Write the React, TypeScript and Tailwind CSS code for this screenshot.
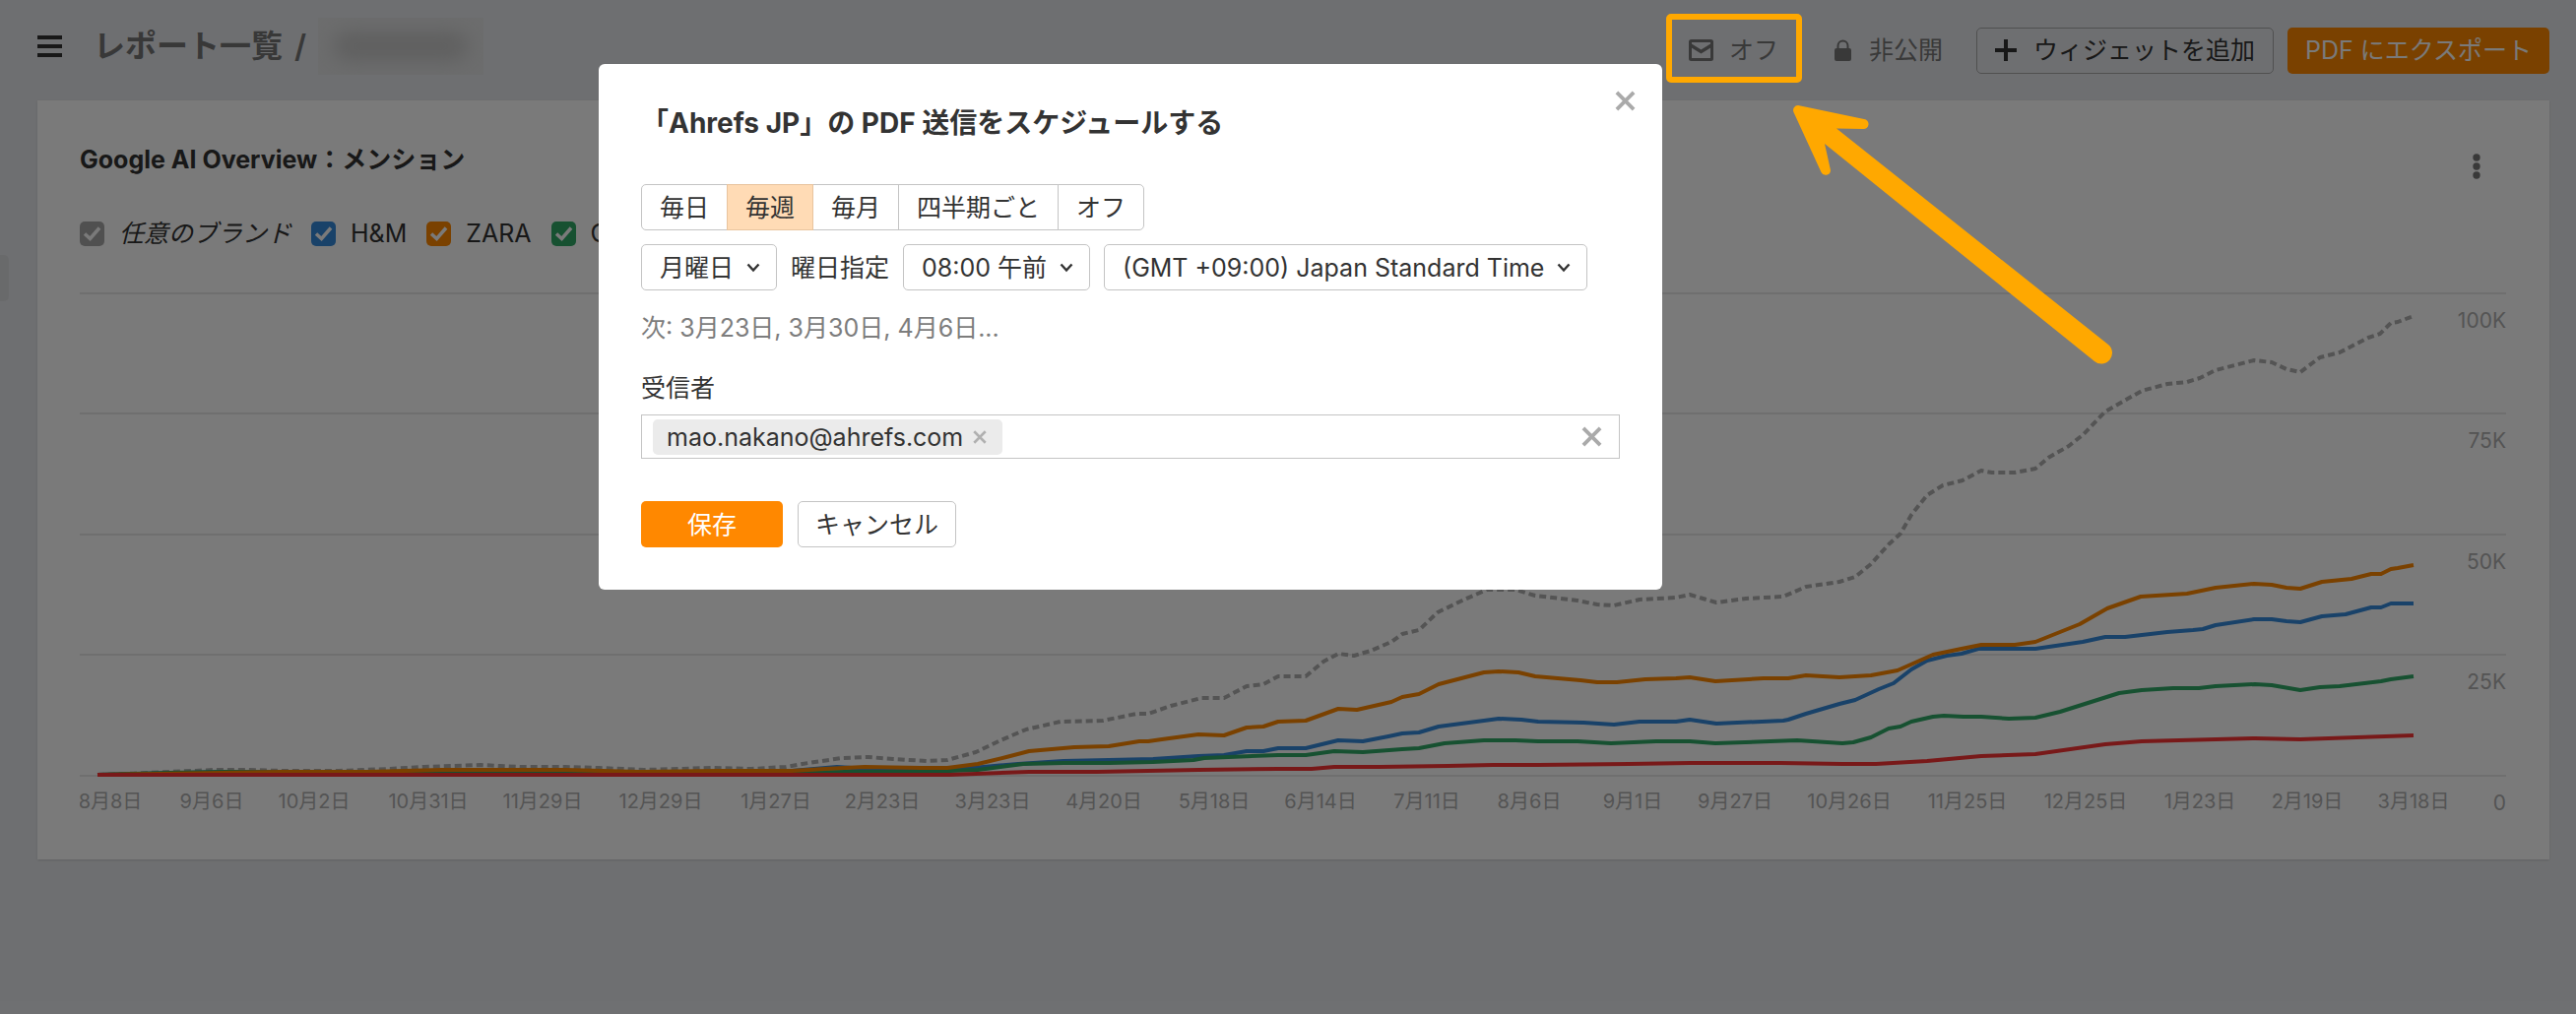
import { useState } from 'react'

type Series = {
  name: string
  color: string
  dashed?: boolean
  points: string
}

const series: Series[] = [
  {
    name: 'any',
    color: '#b0b0b0',
    dashed: true,
    points:
      '99,787 129,786 172,784 218,782 253,782 287,783 344,783 396,781 430,779 488,777 528,779 574,779 608,780 654,782 689,781 723,780 763,781 798,779 821,775 855,770 882,769 907,771 942,773 962,772 991,764 1016,752 1042,741 1077,733 1120,732 1154,725 1166,725 1189,717 1220,709 1243,709 1266,697 1283,695 1298,687 1326,687 1344,672 1359,664 1375,666 1392,661 1413,652 1424,644 1441,640 1460,622 1487,609 1510,599 1539,599 1559,605 1602,610 1622,614 1639,615 1665,609 1702,607 1716,604 1743,612 1773,608 1811,606 1834,596 1868,591 1884,586 1900,573 1918,553 1930,542 1941,523 1957,503 1973,493 1993,488 2012,478 2023,480 2046,480 2067,476 2080,465 2101,453 2116,441 2138,418 2175,397 2201,390 2221,388 2234,384 2250,376 2289,366 2307,368 2322,375 2336,378 2356,363 2376,358 2405,343 2417,339 2428,328 2435,327 2451,321',
  },
  {
    name: 'H&M',
    color: '#368adb',
    points:
      '99,787 230,784 344,785 448,783 574,783 649,785 729,784 804,783 850,779 896,782 959,782 999,779 1034,776 1080,773 1126,772 1171,771 1217,768 1243,767 1266,763 1283,763 1298,760 1326,760 1359,752 1384,753 1410,748 1424,745 1441,744 1461,738 1507,732 1522,730 1545,731 1562,733 1608,734 1639,736 1665,733 1702,733 1716,731 1743,735 1811,732 1816,731 1834,725 1868,715 1884,711 1908,700 1923,694 1941,680 1957,671 1977,666 1992,664 2009,659 2067,659 2115,652 2138,647 2158,647 2201,642 2227,640 2237,639 2250,635 2289,629 2307,629 2322,631 2336,632 2358,626 2382,624 2408,617 2418,617 2428,613 2451,613',
  },
  {
    name: 'GU',
    color: '#30a968',
    points:
      '99,787 172,785 230,784 344,785 545,784 660,785 746,785 861,784 936,784 965,783 993,782 1039,776 1080,775 1126,775 1171,774 1212,772 1223,770 1298,767 1326,767 1355,763 1384,764 1424,761 1441,760 1467,755 1507,752 1539,752 1562,753 1602,753 1636,755 1682,753 1716,753 1742,755 1825,752 1871,755 1882,754 1900,749 1918,740 1930,738 1941,733 1963,728 1974,727 1994,728 2012,728 2040,730 2067,729 2092,723 2152,704 2175,701 2207,699 2233,699 2250,697 2290,695 2307,696 2336,701 2356,698 2376,697 2418,692 2428,690 2451,687',
  },
  {
    name: 'ZARA',
    color: '#ff8800',
    points:
      '99,787 287,784 373,784 448,782 574,782 649,784 729,783 804,783 838,781 878,779 936,780 962,780 993,776 1022,769 1045,763 1091,759 1126,758 1157,753 1166,753 1180,751 1217,746 1243,747 1266,739 1283,738 1298,733 1326,732 1359,720 1378,721 1413,713 1424,708 1441,705 1461,695 1507,683 1522,682 1542,683 1559,687 1605,691 1622,693 1642,693 1671,690 1702,689 1716,688 1742,692 1791,689 1816,689 1834,686 1868,688 1900,686 1927,681 1963,665 1992,659 2012,655 2046,655 2067,652 2112,634 2140,618 2174,606 2221,603 2250,597 2289,593 2307,594 2322,597 2336,598 2358,591 2388,588 2408,583 2418,583 2428,578 2435,577 2451,574',
  },
  {
    name: 'other',
    color: '#fa3636',
    points:
      '99,787 965,787 1045,784 1114,784 1217,782 1298,781 1332,781 1355,779 1401,779 1470,778 1516,777 1562,777 1654,776 1716,775 1808,775 1871,776 1905,776 1957,773 2012,768 2067,766 2138,756 2175,753 2290,750 2336,751 2451,747',
  },
]

const yTicks = [
  { y: 298, label: '100K' },
  { y: 420, label: '75K' },
  { y: 543, label: '50K' },
  { y: 665, label: '25K' },
  { y: 788, label: '0' },
]

const xTicks: [number, string][] = [
  [112, '8月8日'],
  [215, '9月6日'],
  [319, '10月2日'],
  [435, '10月31日'],
  [551, '11月29日'],
  [671, '12月29日'],
  [788, '1月27日'],
  [896, '2月23日'],
  [1008, '3月23日'],
  [1121, '4月20日'],
  [1233, '5月18日'],
  [1341, '6月14日'],
  [1449, '7月11日'],
  [1553, '8月6日'],
  [1658, '9月1日'],
  [1762, '9月27日'],
  [1878, '10月26日'],
  [1998, '11月25日'],
  [2118, '12月25日'],
  [2234, '1月23日'],
  [2343, '2月19日'],
  [2451, '3月18日'],
]

const legend = [
  { label: '任意のブランド', box: 'bg-[#a8a8a8]', text: 'italic' },
  { label: 'H&M', box: 'bg-[#368adb]', text: '' },
  { label: 'ZARA', box: 'bg-[#ff8800]', text: '' },
  { label: 'GU', box: 'bg-[#30a968]', text: '' },
]

const frequencies = ['毎日', '毎週', '毎月', '四半期ごと', 'オフ']

const Cross = ({ className }: { className: string }) => (
  <svg viewBox="0 0 22 22" className={className} fill="none" stroke="currentColor" strokeWidth="4">
    <path d="M2 2 20 20M20 2 2 20" />
  </svg>
)

const Dropdown = ({ label, options }: { label: string; options: string[] }) => (
  <div className="relative">
    <select
      aria-label={label}
      className="block h-[47px] appearance-none rounded-[5px] border border-[#c4c4c4] bg-white pr-[42px] pl-[18px] leading-8"
    >
      {options.map((option) => (
        <option key={option}>{option}</option>
      ))}
    </select>
    <svg
      viewBox="0 0 14 10"
      className="pointer-events-none absolute top-[19px] right-[17px] h-[10px] w-[14px]"
      fill="none"
      stroke="currentColor"
      strokeWidth="2.4"
    >
      <path d="M1.5 1.5 7 7.5 12.5 1.5" />
    </svg>
  </div>
)

const Header = () => (
  <header className="flex h-[102px] items-center justify-between pr-[27px] pl-[38px]">
    <div className="flex items-center pb-2">
      <button aria-label="メニュー" className="flex w-[25px] flex-col gap-[5px]">
        <span className="h-1 bg-[#333]" />
        <span className="h-1 bg-[#333]" />
        <span className="h-1 bg-[#333]" />
      </button>
      <h1 className="ml-8 flex items-center text-[32px] leading-10 font-semibold text-[#757575]">
        <a href="#reports">レポート一覧</a>
        <span className="mx-3">/</span>
        <span className="flex h-[58px] w-[168px] items-center justify-center overflow-hidden bg-[#e2e3e4]">
          <span className="h-7 w-[136px] rounded-full bg-[#c6c6c6] blur-[10px]" />
        </span>
      </h1>
    </div>
    <div className="flex items-center">
      <button className="flex items-center gap-4 text-[#777]">
        <svg viewBox="0 0 25 22" className="h-[22px] w-[25px]" fill="none" stroke="currentColor">
          <rect x="1.5" y="1.5" width="22" height="19" rx="1" strokeWidth="3" />
          <path d="M2 6 12.500 12.500 23 6" strokeWidth="3.400" />
        </svg>
        オフ
      </button>
      <button className="ml-[57px] flex items-center gap-[18px] text-[#777]">
        <svg viewBox="0 0 17 22" className="h-[22px] w-[17px]">
          <rect y="9" width="17" height="13" rx="2" fill="currentColor" />
          <path
            d="M3.500 10V6.500a5 5 0 0 1 10 0V10"
            fill="none"
            stroke="currentColor"
            strokeWidth="2"
          />
        </svg>
        非公開
      </button>
      <button className="ml-[34px] flex h-[47px] items-center gap-[17px] rounded-[5px] border border-[#a8a8a8] px-[18px]">
        <svg viewBox="0 0 22 22" className="size-[22px]" stroke="currentColor" strokeWidth="4">
          <path d="M11 0v22M0 11h22" />
        </svg>
        ウィジェットを追加
      </button>
      <button className="ml-[14px] h-[47px] rounded-[5px] bg-[#ff8800] px-[18px] text-white">
        PDF にエクスポート
      </button>
    </div>
  </header>
)

const Chart = () => (
  <svg viewBox="81 254 2464 576" className="block h-auto w-full" role="img" aria-label="メンション">
    {yTicks.map((tick) => (
      <g key={tick.label}>
        <path d={`M81 ${tick.y}H2545`} stroke="#e9e9e9" strokeWidth="2" />
        <text x="2545" y={tick.y + 35} textAnchor="end" fontSize="21" fill="#b0b0b0">
          {tick.label}
        </text>
      </g>
    ))}
    {series.map((s) => (
      <polyline
        key={s.name}
        points={s.points}
        fill="none"
        stroke={s.color}
        strokeWidth="4"
        strokeLinejoin="round"
        strokeDasharray={s.dashed ? '7 4' : undefined}
      />
    ))}
    {xTicks.map(([x, label]) => (
      <text key={label} x={x} y="821" textAnchor="middle" fontSize="20" fill="#b0b0b0">
        {label}
      </text>
    ))}
  </svg>
)

const MentionsCard = () => (
  <section className="mr-[27px] ml-[38px] bg-white pt-[43px] pr-11 pb-[43px] pl-[43px] shadow-sm">
    <div className="flex items-start justify-between">
      <h2 className="text-[25px] leading-[34px] font-bold">Google AI Overview：メンション</h2>
      <button
        aria-label="その他"
        className="flex h-[47px] w-15 items-center justify-center text-[#777]"
      >
        <svg viewBox="0 0 8 26" className="h-[26px] w-2" fill="currentColor">
          <circle cx="4" cy="4" r="3.700" />
          <circle cx="4" cy="13" r="3.700" />
          <circle cx="4" cy="22" r="3.700" />
        </svg>
      </button>
    </div>
    <div className="mt-7 flex gap-5">
      {legend.map((item) => (
        <label key={item.label} className="flex h-[34px] items-center gap-[15px]">
          <span className="grid place-items-center">
            <input
              type="checkbox"
              defaultChecked
              className={`col-start-1 row-start-1 size-[25px] appearance-none rounded-[5px] ${item.box}`}
            />
            <svg
              viewBox="0 0 25 25"
              className="pointer-events-none col-start-1 row-start-1 size-[25px]"
              fill="none"
              stroke="white"
              strokeWidth="3.500"
            >
              <path d="M5 12.500 10.500 17.500 20 6.500" />
            </svg>
          </span>
          <span className={item.text}>{item.label}</span>
        </label>
      ))}
    </div>
    <Chart />
  </section>
)

const ScheduleDialog = () => {
  const [frequency, setFrequency] = useState('毎週')

  return (
    <div
      role="dialog"
      aria-labelledby="schedule-title"
      className="relative w-[1080px] rounded-md bg-white px-[43px] pt-10 pb-[43px]"
    >
      <button aria-label="閉じる" className="absolute top-[27px] right-[27px] text-[#aaa]">
        <Cross className="size-[21px]" />
      </button>
      <h2 id="schedule-title" className="text-[28px] leading-10 font-bold">
        「Ahrefs JP」の PDF 送信をスケジュールする
      </h2>

      <div className="mt-[42px] flex">
        {frequencies.map((item) => (
          <button
            key={item}
            onClick={() => setFrequency(item)}
            className={`-ml-px h-[47px] border px-[18px] first:ml-0 first:rounded-l-[5px] last:rounded-r-[5px] ${
              item === frequency
                ? 'z-10 border-[#e8c49e] bg-[#ffdbb5]'
                : 'border-[#c4c4c4] bg-white'
            }`}
          >
            {item}
          </button>
        ))}
      </div>

      <div className="mt-[14px] flex items-center gap-[14px]">
        <Dropdown label="曜日" options={['月曜日', '火曜日', '水曜日']} />
        <span>曜日指定</span>
        <Dropdown label="時刻" options={['08:00 午前']} />
        <Dropdown label="タイムゾーン" options={['(GMT +09:00) Japan Standard Time']} />
      </div>

      <p className="mt-5 leading-9 text-[#7d7d7d]">次: 3月23日, 3月30日, 4月6日...</p>

      <label htmlFor="recipients" className="mt-[25px] block leading-9">
        受信者
      </label>
      <div className="mt-[9px] flex h-[45px] items-center border border-[#c4c4c4] pr-[17px] pl-[11px]">
        <span className="flex h-9 items-center gap-[10px] rounded-[5px] bg-[#ebebeb] pr-4 pl-[14px]">
          mao.nakano@ahrefs.com
          <button aria-label="削除" className="text-[#b0b0b0]">
            <Cross className="size-[14px]" />
          </button>
        </span>
        <input id="recipients" type="text" className="h-9 min-w-0 flex-1 px-3 outline-none" />
        <button aria-label="クリア" className="text-[#aaa]">
          <Cross className="size-[21px]" />
        </button>
      </div>

      <div className="mt-[43px] flex gap-[15px]">
        <button className="h-[47px] w-36 rounded-[5px] bg-[#ff8800] text-white">保存</button>
        <button className="h-[47px] rounded-[5px] border border-[#c4c4c4] px-[17px]">
          キャンセル
        </button>
      </div>
    </div>
  )
}

const Annotation = () => (
  <svg
    viewBox="1680 0 480 380"
    className="pointer-events-none absolute top-0 right-[456px] h-[380px] w-[480px]"
  >
    <rect x="1695" y="17" width="132" height="64" rx="2" fill="none" stroke="#ffa800" strokeWidth="6" />
    <path
      d="M1826 107 1893 121A5 5 0 0 1 1892 131L1865 130.500 2141 350A11 11 0 0 1 2127 367L1853 146 1859 173A5 5 0 0 1 1849.500 175L1821.500 114A5 5 0 0 1 1826 107Z"
      fill="#ffa800"
    />
  </svg>
)

export default function App() {
  return (
    <div className="relative min-h-screen bg-[#e7e9ed] font-[Inter,'Noto_Sans_CJK_JP',sans-serif] text-[25px] leading-8 text-[#333]">
      <Header />
      <main>
        <MentionsCard />
      </main>
      <button
        aria-label="サイドバーを開く"
        className="absolute top-[259px] left-0 h-[47px] w-[9px] rounded-r-[5px] bg-[#dcdde0]"
      />

      {/* Backdrop + dialog */}
      <div className="absolute inset-0 bg-black/52 pt-[65px] pl-[608px]">
        <ScheduleDialog />
      </div>
      <Annotation />
    </div>
  )
}
